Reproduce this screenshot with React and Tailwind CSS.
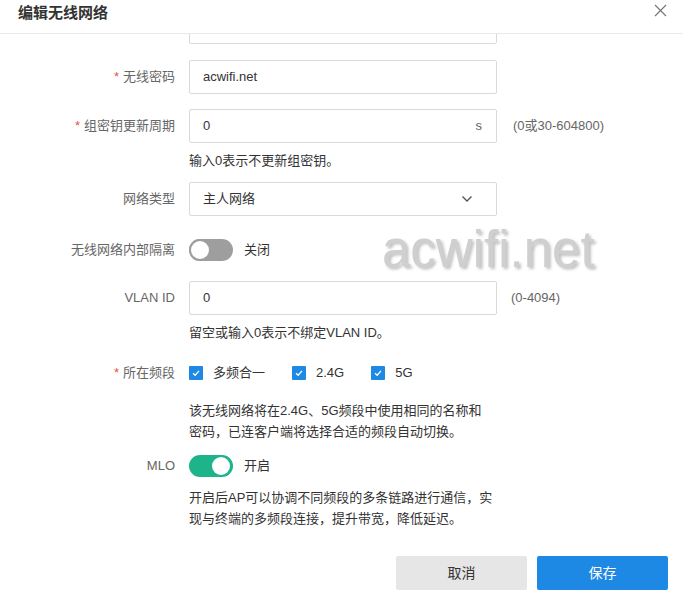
import React from "react";

const font = { fontFamily: '"Liberation Sans", "Noto Sans CJK SC", sans-serif' };

function Label({ children, req }) {
  return (
    <div className="w-[175px] shrink-0 text-right text-[13px] text-[#666] pr-0">
      {req && <span className="text-[#e5534b] mr-[4px]">*</span>}
      {children}
    </div>
  );
}

function Row({ label, req, children, className = "" }) {
  return (
    <div className={"flex items-center h-[34px] " + className}>
      <Label req={req}>{label}</Label>
      <div className="ml-[14px] flex items-center">{children}</div>
    </div>
  );
}

function Input({ value, suffix }) {
  return (
    <div className="w-[308px] h-[34px] border border-[#d9d9d9] rounded-[2px] flex items-center px-[13px] text-[13px] text-[#333]">
      <span className="flex-1">{value}</span>
      {suffix && <span className="text-[#666] mr-[1px]">{suffix}</span>}
    </div>
  );
}

function Hint({ children, className = "" }) {
  return (
    <div className={"ml-[189px] text-[13px] leading-[21px] text-[#333] " + className}>{children}</div>
  );
}

function Toggle({ on }) {
  return on ? (
    <div className="w-[44px] h-[22px] rounded-full bg-[#1db38b] relative">
      <div className="absolute right-[3px] top-[2px] w-[18px] h-[18px] rounded-full bg-white" />
    </div>
  ) : (
    <div className="w-[44px] h-[22px] rounded-full bg-[#9e9e9e] relative">
      <div className="absolute left-0 top-0 w-[22px] h-[22px] rounded-full bg-white border-2 border-[#9e9e9e]" />
    </div>
  );
}

function Check({ label }) {
  return (
    <div className="flex items-center">
      <div className="w-[14px] h-[14px] bg-[#1e88e5] rounded-[1px] flex items-center justify-center">
        <svg width="10" height="10" viewBox="0 0 10 10">
          <path d="M2 5.2 L4.2 7.2 L8 2.8" stroke="white" strokeWidth="1.3" fill="none" />
        </svg>
      </div>
      <span className="ml-[10px] text-[13px] text-[#333]">{label}</span>
    </div>
  );
}

export default function App() {
  return (
    <div className="w-[683px] h-[596px] bg-white relative overflow-hidden flex flex-col" style={font}>
      <div className="h-[34px] shrink-0 border-b border-[#eaeaea] flex items-center px-[18px] relative">
        <span className="text-[15px] font-bold text-[#333] -mt-[6px]">编辑无线网络</span>
        <svg className="absolute left-[654px] top-[4px]" width="13" height="13" viewBox="0 0 13 13">
          <path d="M1 1 L12 12 M12 1 L1 12" stroke="#777" strokeWidth="1.2" />
        </svg>
      </div>
      <div className="flex-1 overflow-hidden">
        <div className="flex flex-col">
          <div className="ml-[189px] -mt-[24px] w-[308px] h-[34px] border border-[#d9d9d9] rounded-[2px]" />
          <Row label="无线密码" req className="mt-[16px]">
            <Input value="acwifi.net" />
          </Row>
          <Row label="组密钥更新周期" req className="mt-[15px]">
            <Input value="0" suffix="s" />
            <span className="ml-[16px] text-[13px] text-[#666]">(0或30-604800)</span>
          </Row>
          <Hint className="mt-[7px]">输入0表示不更新组密钥。</Hint>
          <Row label="网络类型" className="mt-[11px]">
            <div className="w-[308px] h-[34px] border border-[#d9d9d9] rounded-[2px] flex items-center px-[13px] text-[13px] text-[#333]">
              <span className="flex-1">主人网络</span>
              <svg width="12" height="8" viewBox="0 0 12 8" className="mr-[10px]">
                <path d="M1.5 1.5 L6 6 L10.5 1.5" stroke="#555" strokeWidth="1.4" fill="none" />
              </svg>
            </div>
          </Row>
          <Row label="无线网络内部隔离" className="mt-[17px]">
            <Toggle on={false} />
            <span className="ml-[11px] text-[13px] text-[#333]">关闭</span>
          </Row>
          <Row label="VLAN ID" className="mt-[14px]">
            <Input value="0" />
            <span className="ml-[14px] text-[13px] text-[#666]">(0-4094)</span>
          </Row>
          <Hint className="mt-[7px]">留空或输入0表示不绑定VLAN ID。</Hint>
          <Row label="所在频段" req className="mt-[13px]">
            <div className="flex items-center">
              <Check label="多频合一" />
              <div className="ml-[27px]"><Check label="2.4G" /></div>
              <div className="ml-[27px]"><Check label="5G" /></div>
            </div>
          </Row>
          <Hint className="mt-[10px]">
            该无线网络将在2.4G、5G频段中使用相同的名称和<br />密码，已连客户端将选择合适的频段自动切换。
          </Hint>
          <Row label="MLO" className="mt-[7px]">
            <Toggle on />
            <span className="ml-[11px] text-[13px] text-[#333]">开启</span>
          </Row>
          <Hint className="mt-[4px]">
            开启后AP可以协调不同频段的多条链路进行通信，实<br />现与终端的多频段连接，提升带宽，降低延迟。
          </Hint>
        </div>
      </div>
      <div className="h-[40px] shrink-0 flex justify-end items-start pr-[15px]">
        <button className="w-[131px] h-[34px] bg-[#e6e6e6] text-[14px] text-[#333] rounded-[2px]">取消</button>
        <button className="ml-[10px] w-[131px] h-[34px] bg-[#1e88e5] text-[14px] text-white rounded-[2px]">保存</button>
      </div>
      <div
        className="absolute left-[382px] top-[212px] text-[51px] text-[#cfcfcf] pointer-events-none"
        style={{ fontFamily: '"Liberation Sans", sans-serif', textShadow: "2px 2px 3px rgba(0,0,0,0.25)" }}
      >
        acwifi.net
      </div>
    </div>
  );
}
